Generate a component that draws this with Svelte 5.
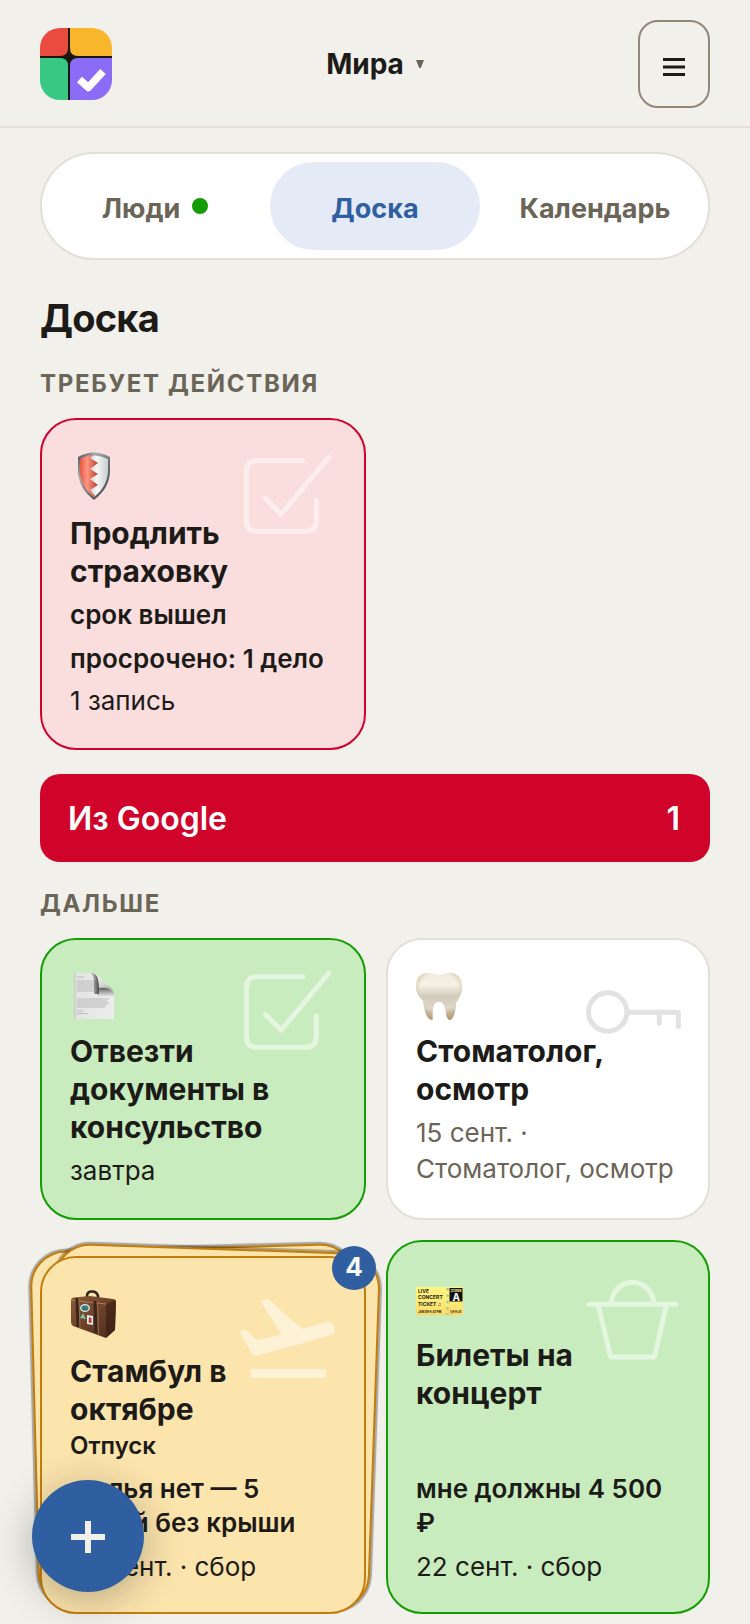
<script lang="ts">
  const people = ['Мира'];
  let tab = $state('board');

  const tabs = [
    { id: 'people', label: 'Люди', dot: true },
    { id: 'board', label: 'Доска', dot: false },
    { id: 'calendar', label: 'Календарь', dot: false }
  ];

  const urgent = [
    {
      tone: 'red', size: 'regular', icon: 'shield', mark: 'check', title: 'Продлить страховку',
      kind: '', strong: ['срок вышел', 'просрочено: 1 дело'], meta: '1 запись', count: 0
    }
  ];

  const later = [
    {
      tone: 'green', size: 'compact', icon: 'page', mark: 'check', title: 'Отвезти документы в консульство',
      kind: '', strong: [], meta: 'завтра', count: 0
    },
    {
      tone: 'plain', size: 'compact', icon: 'tooth', mark: 'key', title: 'Стоматолог, осмотр',
      kind: '', strong: [], meta: '15 сент. · Стоматолог, осмотр', count: 0
    },
    {
      tone: 'amber', size: 'tall', icon: 'case', mark: 'plane', title: 'Стамбул в октябре',
      kind: 'Отпуск', strong: ['жилья нет — 5 ночей без крыши'], meta: '22 сент. · сбор', count: 4
    },
    {
      tone: 'green', size: 'tall', icon: 'ticket', mark: 'basket', title: 'Билеты на концерт',
      kind: '', strong: ['мне должны 4\u00a0500 ₽'], meta: '22 сент. · сбор', count: 0
    }
  ];
</script>

{#snippet emoji(name: string)}
  <svg class="emoji" viewBox="0 0 48 48" aria-hidden="true">
    {#if name === 'shield'}
      <defs>
        <linearGradient id="sh-rim" x1="0" y1="0" x2="1" y2="1">
          <stop offset="0" stop-color="#4c4f50" /><stop offset=".3" stop-color="#a9adae" />
          <stop offset=".6" stop-color="#6a6e70" /><stop offset="1" stop-color="#3c3f41" />
        </linearGradient>
        <linearGradient id="sh-red" x1="0" x2="1">
          <stop offset="0" stop-color="#e8573f" /><stop offset=".4" stop-color="#ff9583" />
          <stop offset="1" stop-color="#b93a22" />
        </linearGradient>
        <linearGradient id="sh-white" x1="0" x2="1">
          <stop offset="0" stop-color="#8f9799" /><stop offset=".6" stop-color="#f6f8f8" />
          <stop offset="1" stop-color="#c8cdcf" />
        </linearGradient>
      </defs>
      <path d="M8 5Q24-4 40 5V18C40 31 34 40 24 48C14 40 8 31 8 18Z" fill="url(#sh-rim)" />
      <path d="M10 7Q24 0 38 7V18C38 29 33 38 24 45C15 38 10 29 10 18Z" fill="url(#sh-white)" />
      <path d="M10 7Q16 3.500 23 3.300L20 6L28 11L20 17L28 22L20 27L28 33L20 38L25 44L24 45C15 38 10 29 10 18Z" fill="url(#sh-red)" />
    {:else if name === 'page'}
      <defs>
        <linearGradient id="pg" x1="0" x2="1">
          <stop offset="0" stop-color="#c9c9c9" /><stop offset=".08" stop-color="#e4e4e4" />
          <stop offset="1" stop-color="#ededed" />
        </linearGradient>
        <linearGradient id="fold" x1=".3" y1="0" x2=".6" y2="1">
          <stop offset="0" stop-color="#fafafa" /><stop offset=".6" stop-color="#d4d4d4" />
          <stop offset="1" stop-color="#8a8a8a" />
        </linearGradient>
        <linearGradient id="fold-shade" x1="0" y1="0" x2="1" y2="0">
          <stop offset="0" stop-color="#555" stop-opacity="0" /><stop offset="1" stop-color="#444" />
        </linearGradient>
        <linearGradient id="fold-under" x1="0" y1="0" x2="0" y2="1">
          <stop offset="0" stop-color="#4e4e4e" /><stop offset="1" stop-color="#777" stop-opacity=".1" />
        </linearGradient>
      </defs>
      <path d="M4 1H23C28 1 30 5 31 10L38 15C43 18 44 21 44 25V47H4Z" fill="url(#pg)" />
      <path d="M7 5h7M7 9h18M7 11h19M7 13h18M7 15h19M7 17h18M7 19h17M7 27h32M7 29h30M7 31h32M7 33h30M7 35h28M7 39h6M7 41.500h11" stroke="#a8a8a8" fill="none" stroke-width=".7" />
      <path d="M20 1H23C29 2 29 10 29 16V22H24V10Q24 4 20 1Z" fill="url(#fold-shade)" />
      <path d="M27 15.500Q41 14 44 22V24H27Z" fill="url(#fold-under)" />
      <path d="M23 1C28 2 29 9 29 16Q40 14 44 21Q43 17 37 13L29 5Q26 1 23 1Z" fill="url(#fold)" />
    {:else if name === 'tooth'}
      <defs>
        <linearGradient id="th" x1="0" y1="0" x2="0" y2="1">
          <stop offset="0" stop-color="#eeeadc" /><stop offset=".25" stop-color="#f5f2e6" />
          <stop offset=".5" stop-color="#d2cabb" /><stop offset=".75" stop-color="#ded7c8" />
          <stop offset="1" stop-color="#b49a7a" />
        </linearGradient>
        <radialGradient id="th-edge" cx=".5" cy=".4" r=".7">
          <stop offset=".6" stop-color="#b99c78" stop-opacity="0" /><stop offset="1" stop-color="#b08c62" stop-opacity=".8" />
        </radialGradient>
      </defs>
      {#each ['url(#th)', 'url(#th-edge)'] as fill}
        <path d="M10 1C15 0 18 3 23 3S31 0 36 1C43 2 46 8 46 15C46 22 43 26 40 31C40 37 38 47 34 48C28 48 32 30 23 30S18 48 16 48C10 47 8 37 7 29C4 25 0 22 0 15C0 7 3 2 10 1Z" {fill} />
      {/each}
    {:else if name === 'case'}
      <defs>
        <linearGradient id="cs" x1="0" y1="0" x2="1" y2="1">
          <stop offset="0" stop-color="#8a593a" /><stop offset=".5" stop-color="#6c422a" />
          <stop offset="1" stop-color="#4a2b1c" />
        </linearGradient>
      </defs>
      <path d="M17 10V6Q17 2 21 1.500Q27 1 28 6V11" fill="none" stroke="#2b2724" stroke-width="2.600" />
      <path d="M1 10Q1 8 4 7.500L20 6L43 9Q46 9 46 13L45 40L36 48L3 36Q1 35 1 31Z" fill="url(#cs)" />
      <path d="M36 14L46 10L45 40L36 48Z" fill="#3b2115" opacity=".7" />
      <path d="M1 10L25 13L36 14" stroke="#b07e58" stroke-width="1" fill="none" />
      <path d="M7 8L8 37M25 11L26 43" stroke="#38251b" stroke-width="3" fill="none" />
      <path d="M9 8L10 38M27.500 11L28.500 44" stroke="#9a6b49" stroke-width="1" fill="none" />
      <ellipse cx="15" cy="18" rx="5" ry="4" fill="#dbe7df" />
      <ellipse cx="15" cy="18" rx="3.600" ry="2.700" fill="#3d7c9a" />
      <path d="M12 19L15 17L18 20Q15 21 12 19Z" fill="#3c7440" />
      <path d="M13 23L16 29L10 28Z" fill="#79c5a8" />
      <path d="M17 25L23 26V35L17 34Z" fill="#dcefed" />
      <path d="M19 27L21.500 28V33L18.500 32.500Z" fill="#c33a34" />
    {:else}
      <defs>
        <linearGradient id="tk" x1="0" y1="0" x2="0" y2="1">
          <stop offset="0" stop-color="#fff47d" /><stop offset=".5" stop-color="#ffec7b" />
          <stop offset="1" stop-color="#fbd863" />
        </linearGradient>
      </defs>
      <rect x="0" y="13" width="47" height="28" fill="url(#tk)" />
      <path d="M31.500 14V41" stroke="#9cc79a" stroke-width="2.400" stroke-dasharray="2.400 4" />
      <rect x="33.500" y="14" width="13" height="13.500" fill="#111" />
      <g font-family="Inter, sans-serif" font-weight="700" fill="#1c1b10">
        <text x="2" y="19" font-size="5">LIVE</text>
        <text x="2" y="25" font-size="5">CONCERT</text>
        <text x="2" y="31.500" font-size="5">TICKET ♫</text>
        <text x="2" y="38.500" font-size="3">JAN 09  9:41 PM</text>
        <text x="34" y="38.500" font-size="3">1/9  9:41</text>
        <text x="34.500" y="18" font-size="4" fill="#ffe97a">ZONE</text>
        <text x="36.500" y="26.500" font-size="10" fill="#fff">A</text>
      </g>
    {/if}
  </svg>
{/snippet}

{#snippet watermark(name: string)}
  <svg class="mark" viewBox="0 0 96 96" aria-hidden="true">
    {#if name === 'check'}
      <path d="M62.500 8.700H17Q6.300 8.700 6.300 19.500V68.500Q6.300 79.300 17 79.300H65.500Q76.300 79.300 76.300 68.500V48M25.300 46.300L41 62.300L88.700 5.300" />
    {:else if name === 'key'}
      <circle cx="23.700" cy="44" r="19.200" />
      <path d="M43 44.300H94.300V58.500M75.300 44.300V55" />
    {:else if name === 'plane'}
      <path class="solid" d="M-1 41L6 39.500L16.700 50.300L41.300 44.700L20.300 10.700L28.300 9L61.700 38.700L86 32.200A6.900 6.900 0 0 1 89.500 45.600L17 65.700Q14 66.300 12.300 64Z" />
      <path class="solid" d="M10.700 79H85.700V88H10.700Z" />
    {:else}
      <path d="M5 30.300H91.700M27.300 30.300A21.200 22 0 0 1 69.700 30.300M14.300 32L26.700 83H70.300L82.300 32" />
    {/if}
  </svg>
{/snippet}

{#snippet card(item)}
  <div class="slot" class:stacked={item.count > 0}>
    {#if item.count > 0}
      <span class="sheet left"></span>
      <span class="sheet right"></span>
    {/if}
    <article class="card {item.tone} {item.size}">
      {@render watermark(item.mark)}
      {@render emoji(item.icon)}
      <h3>{item.title}</h3>
      {#if item.kind}<p class="kind">{item.kind}</p>{/if}
      <div class="foot">
        {#if item.strong.length}
          <div class="strong">
            {#each item.strong as line}<p>{line}</p>{/each}
          </div>
        {/if}
        <p class="meta">{item.meta}</p>
      </div>
    </article>
    {#if item.count > 0}<span class="badge">{item.count}</span>{/if}
  </div>
{/snippet}

<header>
  <a class="logo" href="#home" aria-label="Главная">
    <svg viewBox="0 0 72 72" aria-hidden="true">
      <defs><clipPath id="logo-clip"><rect width="72" height="72" rx="20" /></clipPath></defs>
      <g clip-path="url(#logo-clip)">
        <path d="M28 0H30V28H72V30H30V72H28V30H0V28H28Z" fill="#1a1712" />
        <rect x="20" y="20" width="18" height="18" fill="#1a1712" />
        <path d="M0 0H28V20Q28 28 20 28H0Z" fill="#e94b3e" />
        <path d="M30 0H72V28H38Q30 28 30 20Z" fill="#f8b62b" />
        <path d="M0 30H20Q28 30 28 38V72H0Z" fill="#38c883" />
        <path d="M38 30H72V72H30V38Q30 30 38 30Z" fill="#8b6cf7" />
        <path d="M39.500 51.500L48.300 59.500L63 43.500" fill="none" stroke="#fff" stroke-width="7.500" stroke-linejoin="round" />
      </g>
    </svg>
  </a>
  <button class="person">{people[0]}
    <svg viewBox="0 0 8 8" aria-hidden="true"><path d="M0 0H8L4.800 8H3.200Z" /></svg>
  </button>
  <button class="menu" aria-label="Меню">
    <svg viewBox="0 0 22 20" aria-hidden="true"><path d="M0 2.500H22M0 10H22M0 17.500H22" /></svg>
  </button>
</header>

<main>
  <nav>
    {#each tabs as item}
      <button class:active={tab === item.id} onclick={() => (tab = item.id)}>
        <span class="label">{item.label}</span>{#if item.dot}<span class="dot"></span>{/if}
      </button>
    {/each}
  </nav>

  <h1>Доска</h1>

  <h2>Требует действия</h2>
  <section class="grid">
    {#each urgent as item}{@render card(item)}{/each}
  </section>

  <button class="google"><span>Из Google</span><span>1</span></button>

  <h2>Дальше</h2>
  <section class="grid">
    {#each later as item}{@render card(item)}{/each}
  </section>
</main>

<button class="add" aria-label="Добавить">
  <svg viewBox="0 0 34 34" aria-hidden="true"><path d="M0 18H34M17 2V34" /></svg>
</button>

<style>
  :global(body) {
    background: #f1f0eb;
    color: #1c1b18;
    font-family: Inter, 'Liberation Sans', sans-serif;
  }
  button {
    font: inherit;
    color: inherit;
    border: 0;
    background: none;
    padding: 0;
    cursor: pointer;
  }
  h1, h2, h3, p { margin: 0; }

  header {
    display: grid;
    grid-template-columns: 72px 1fr 72px;
    align-items: center;
    padding: 20px 40px 18px;
    border-bottom: 2px solid #e6e0d8;
  }
  .logo, .logo svg { display: block; height: 72px; }
  .person {
    justify-self: center;
    display: flex;
    align-items: center;
    gap: 12px;
    font-size: 28px;
    line-height: 36px;
    font-weight: 700;
  }
  .person svg { width: 8px; height: 8px; fill: #6b6558; }
  .menu {
    display: grid;
    place-items: center;
    height: 88px;
    border: 2px solid #918878;
    border-radius: 20px;
  }
  .menu svg {
    width: 22px;
    height: 20px;
    margin-top: 6px;
    stroke: #1c1b18;
    stroke-width: 3;
  }

  main { padding: 24px 40px 10px; }

  nav {
    display: grid;
    grid-template-columns: repeat(3, 1fr);
    gap: 10px;
    padding: 8px;
    border: 2px solid #e4dfd6;
    border-radius: 54px;
    background: #fff;
  }
  nav button {
    display: flex;
    align-items: center;
    justify-content: center;
    gap: 12px;
    height: 88px;
    border-radius: 44px;
    color: #6b6558;
    font-size: 27px;
    font-weight: 700;
  }
  nav .active { background: #e4ebf7; color: #2f5fa0; }
  .label { padding-top: 4px; }
  .dot {
    width: 16px;
    height: 16px;
    border-radius: 50%;
    background: #149c05;
  }

  h1 {
    margin-top: 34px;
    font-size: 38px;
    line-height: 48px;
    font-weight: 700;
    letter-spacing: -0.02em;
  }
  h2 {
    margin: 27px 0 19px;
    color: #6b6558;
    font-size: 24px;
    line-height: 30px;
    font-weight: 700;
    letter-spacing: 0.07em;
    text-transform: uppercase;
  }

  .grid {
    display: grid;
    grid-template-columns: 163fr 162fr;
    gap: 20px;
  }
  .slot {
    position: relative;
    display: flex;
    min-width: 0;
  }
  .stacked { margin-top: 16px; }

  .card {
    position: relative;
    display: flex;
    flex-direction: column;
    flex: 1;
    min-width: 0;
    padding: 32px 28px 29px;
    border: 2px solid;
    border-radius: 36px;
  }
  .tall { padding-bottom: 27px; }
  .red { background: #fadddd; border-color: #d0032c; }
  .green { background: #c9ecbf; border-color: #149c05; }
  .plain { background: #fff; border-color: #e4dfd6; }
  .amber { background: #fce4ad; border-color: #c47d0b; }

  .emoji {
    width: 48px;
    height: 48px;
    margin-bottom: 14px;
  }
  .compact .emoji { margin-bottom: 12px; }

  .mark {
    position: absolute;
    top: 32px;
    right: 28px;
    width: 96px;
    height: 96px;
    overflow: visible;
    fill: none;
    stroke: #fff;
    stroke-width: 5;
    stroke-linecap: round;
    stroke-linejoin: round;
    opacity: 0.5;
  }
  .mark .solid { fill: #fff; stroke: none; }
  .compact .mark { top: 28px; }
  .plain .mark { stroke: #1c1b18; opacity: 0.12; }

  h3 {
    position: relative;
    font-size: 30px;
    line-height: 38px;
    font-weight: 700;
  }
  .kind {
    margin-top: 3px;
    margin-bottom: 3px;
    font-size: 24px;
    line-height: 30px;
    font-weight: 600;
  }
  .strong {
    display: flex;
    flex-direction: column;
    gap: 10px;
    margin-top: 8px;
    font-size: 26px;
    line-height: 34px;
    font-weight: 600;
  }
  .meta {
    margin-top: 7px;
    font-size: 26px;
    line-height: 36px;
  }
  .plain .meta { color: #6b6558; }
  .tall .foot { margin-top: auto; }
  .tall .meta { margin-top: 9px; }

  .sheet {
    position: absolute;
    inset: 0;
    border: 2px solid #c47d0b;
    border-radius: 36px;
    background: #fce4ad;
    box-shadow: 0 0 1px 2px rgba(28, 27, 24, 0.35);
  }
  .sheet.left { transform: translate(-6px, -9px) rotate(-1.5deg); }
  .sheet.right { transform: translate(9px, -8px) rotate(2deg); }

  .badge {
    position: absolute;
    top: -10px;
    right: -10px;
    width: 44px;
    height: 44px;
    border-radius: 50%;
    background: #2f5fa0;
    color: #fff;
    font-size: 26px;
    line-height: 42px;
    font-weight: 700;
    text-align: center;
  }

  .google {
    display: flex;
    align-items: center;
    justify-content: space-between;
    width: 100%;
    height: 88px;
    margin-top: 24px;
    padding: 0 30px 0 28px;
    border-radius: 20px;
    background: #d0032b;
    color: #fff;
    font-size: 32px;
    font-weight: 600;
  }

  .add {
    position: fixed;
    left: 32px;
    bottom: 32px;
    display: grid;
    place-items: center;
    width: 112px;
    height: 112px;
    border-radius: 50%;
    background: #2f5fa0;
    box-shadow: 0 8px 40px rgba(28, 27, 24, 0.3);
  }
  .add svg {
    width: 34px;
    height: 34px;
    stroke: #f1f0eb;
    stroke-width: 6;
  }
</style>
